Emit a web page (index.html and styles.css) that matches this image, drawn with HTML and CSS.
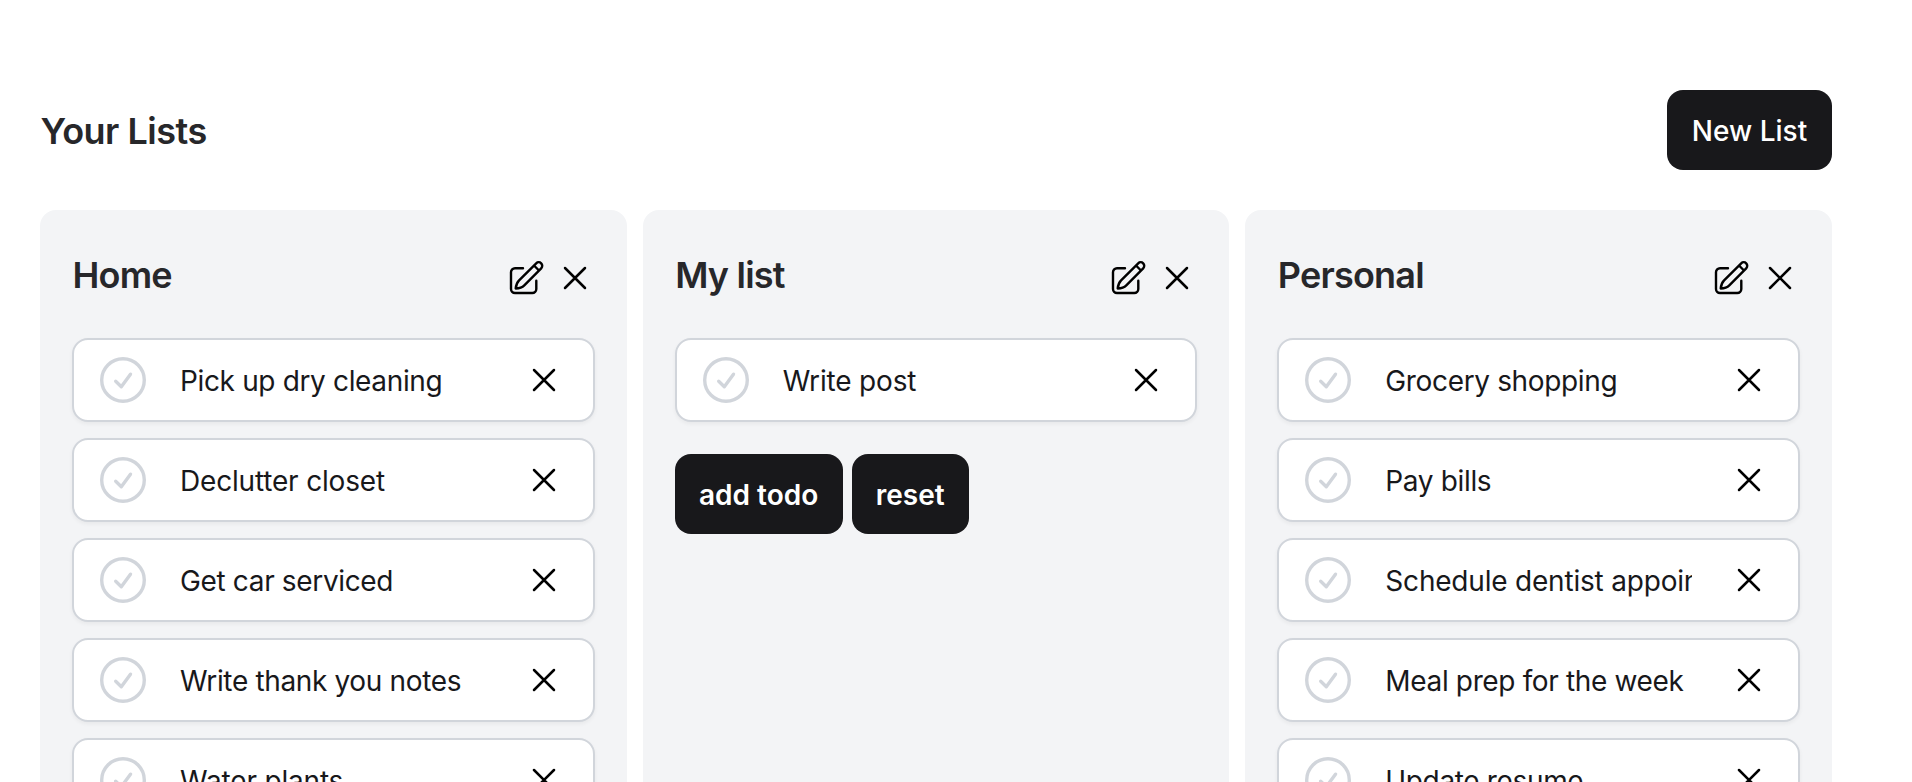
FILE: index.html
```
<!DOCTYPE html>
<html lang="en">
<head>
<meta charset="utf-8">
<title>Your Lists</title>
<link rel="stylesheet" href="styles.css">
</head>
<body>
<svg class="defs" aria-hidden="true">
  <symbol id="cross" viewBox="0 0 24 24"><path d="M6 6l12 12M18 6L6 18"/></symbol>
  <symbol id="edit" viewBox="0 0 38 38"><path d="M16 8.2H8a4 4 0 0 0-4 4V29a4 4 0 0 0 4 4h17.300a4 4 0 0 0 4-4v-8.200"/><path d="M8.700 28.500c.3-3.800 1.200-6 3.400-8.200L29.200 3.300a3.500 3.500 0 0 1 5 5L17.300 25.300c-2.500 2.500-4.800 3-8.600 3.200zM27 5.500l5 5"/></symbol>
  <symbol id="check" viewBox="0 0 46 46"><circle cx="23" cy="23" r="21.300"/><path d="M15.700 24.300l5.600 5.400 9.200-12.500"/></symbol>
</svg>
<main class="page">
  <header class="top"><h1 class="title page-title">Your Lists</h1><button class="btn btn-new">New List</button></header>
  <div class="board">
    <section class="list">
      <div class="list-head"><h2 class="title">Home</h2><svg class="edit"><use href="#edit"/></svg><svg class="cross"><use href="#cross"/></svg></div>
      <ul class="items">
        <li class="item"><svg class="check"><use href="#check"/></svg><span class="text">Pick up dry cleaning</span><svg class="cross"><use href="#cross"/></svg></li>
        <li class="item"><svg class="check"><use href="#check"/></svg><span class="text text-loose">Declutter closet</span><svg class="cross"><use href="#cross"/></svg></li>
        <li class="item"><svg class="check"><use href="#check"/></svg><span class="text">Get car serviced</span><svg class="cross"><use href="#cross"/></svg></li>
        <li class="item"><svg class="check"><use href="#check"/></svg><span class="text">Write thank you notes</span><svg class="cross"><use href="#cross"/></svg></li>
        <li class="item"><svg class="check"><use href="#check"/></svg><span class="text text-loose">Water plants</span><svg class="cross"><use href="#cross"/></svg></li>
      </ul>
    </section>
    <section class="list">
      <div class="list-head"><h2 class="title">My list</h2><svg class="edit"><use href="#edit"/></svg><svg class="cross"><use href="#cross"/></svg></div>
      <ul class="items">
        <li class="item"><svg class="check"><use href="#check"/></svg><span class="text text-loose">Write post</span><svg class="cross"><use href="#cross"/></svg></li>
      </ul>
      <div class="actions"><button class="btn btn-add">add todo</button><button class="btn btn-reset">reset</button></div>
    </section>
    <section class="list">
      <div class="list-head"><h2 class="title">Personal</h2><svg class="edit"><use href="#edit"/></svg><svg class="cross"><use href="#cross"/></svg></div>
      <ul class="items">
        <li class="item"><svg class="check"><use href="#check"/></svg><span class="text">Grocery shopping</span><svg class="cross"><use href="#cross"/></svg></li>
        <li class="item"><svg class="check"><use href="#check"/></svg><span class="text">Pay bills</span><svg class="cross"><use href="#cross"/></svg></li>
        <li class="item"><svg class="check"><use href="#check"/></svg><span class="text text-clipped">Schedule dentist appointment</span><svg class="cross"><use href="#cross"/></svg></li>
        <li class="item"><svg class="check"><use href="#check"/></svg><span class="text">Meal prep for the week</span><svg class="cross"><use href="#cross"/></svg></li>
        <li class="item"><svg class="check"><use href="#check"/></svg><span class="text">Update resume</span><svg class="cross"><use href="#cross"/></svg></li>
      </ul>
    </section>
  </div>
</main>
</body>
</html>
```
FILE: styles.css
```
* { box-sizing: border-box; }
html, body { margin: 0; height: 100%; overflow: hidden; background: #fff; }
body { font-family: Inter, "Liberation Sans", sans-serif; color: #18181b; }
svg { fill: none; stroke: #000; stroke-width: 1.5; stroke-linecap: round; stroke-linejoin: round; flex: none; }
.defs { display: none; }
.page { height: 782px; padding: 90px 80px 0 40px; overflow: hidden; }
.top { display: flex; justify-content: space-between; align-items: center; height: 80px; margin-bottom: 40px; }
.title { margin: 0; padding-left: 0.5px; font-size: 36px; line-height: 56px; font-weight: 600; letter-spacing: -0.8px; color: #27272a; white-space: nowrap; }
.page-title { padding-top: 2px; letter-spacing: -0.5px; }
.btn { height: 80px; padding: 2px 0 0; border: 0; border-radius: 16px; background: #18181b; color: #fff; font: 500 28px Inter, "Liberation Sans", sans-serif; white-space: nowrap; }
.btn-new { width: 165px; }
.btn-add { width: 168px; }
.btn-reset { width: 117px; }
.actions .btn { font-weight: 600; }
.board { display: grid; grid-template-columns: repeat(3, 1fr); gap: 16px; height: 700px; }
.list { min-width: 0; padding: 32px; border-radius: 16px; background: #f3f4f6; }
.list-head { display: flex; align-items: center; height: 72px; margin-bottom: 24px; }
.list-head .title { flex: 1; padding-bottom: 6px; }
.edit { width: 38px; height: 38px; margin: 1px 10px 0 0; stroke-width: 2.4; }
.cross { width: 40px; height: 40px; }
.items { display: flex; flex-direction: column; gap: 16px; margin: 0; padding: 0; list-style: none; }
.item { display: flex; align-items: center; height: 84px; padding: 0 29px 0 26px; border: 2px solid #d1d5db; border-radius: 16px; background: #fff; box-shadow: 0 2px 4px rgba(0, 0, 0, .05); }
.check { width: 46px; height: 46px; stroke: #d1d5db; stroke-width: 3.4; }
.text { width: 308px; margin: 2px auto 0 34px; overflow: hidden; font-size: 28px; line-height: 40px; letter-spacing: -0.35px; white-space: nowrap; }
.text-loose { letter-spacing: -0.18px; }
.text-clipped { width: 307px; margin-right: 0; letter-spacing: -0.2px; }
.text-clipped + .cross { margin-left: auto; }
.actions { display: flex; gap: 9px; margin-top: 32px; }
```
